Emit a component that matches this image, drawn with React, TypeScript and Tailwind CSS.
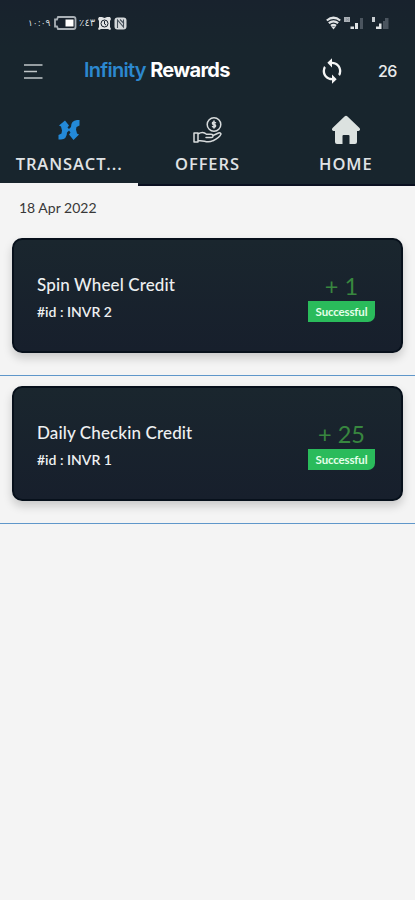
import { MdSync } from 'react-icons/md';

interface Transaction {
    title: string;
    id: string;
    amount: string;
}

const transactions: Transaction[] = [
    { title: 'Spin Wheel Credit', id: 'INVR 2', amount: '+ 1' },
    { title: 'Daily Checkin Credit', id: 'INVR 1', amount: '+ 25' },
];

function StatusBar() {
    return (
        <div className="flex h-[46px] items-center justify-between pl-7 pr-[26px] text-[#d5dadd]">
            <div className="flex items-center">
                <span className="w-[25px] whitespace-nowrap font-['DejaVu_Sans',sans-serif] text-[9px] leading-none">
                    ١٠:٠٩
                </span>
                <svg className="h-[14px] w-6" viewBox="0 0 24 14">
                    <path
                        d="M5 1h15.500q2 0 2 2v8q0 2-2 2H5l-1-2.500H2v-7h2z"
                        fill="#18222d"
                        stroke="#a9b0b6"
                        strokeWidth="1.800"
                    />
                    <path d="M12.500 3.500h8v7h-8z" fill="#fff" />
                </svg>
                <span className="ml-[2px] w-[19px] whitespace-nowrap font-['DejaVu_Sans',sans-serif] text-[10px] leading-none">
                    ٪٤٣
                </span>
                <svg className="h-[13px] w-[13px]" viewBox="0 0 13 13">
                    <path
                        d="M1 0h3l2.500 1L9 0h3l1 2-1 2v6l1 2-1 1-2-1H3l-2 1-1-1 1-2V4L0 2z"
                        fill="#e2e4e5"
                    />
                    <circle cx="6.500" cy="6.500" r="3.500" fill="none" stroke="#18222d" />
                    <path d="M6.500 4v3l1.500 1" fill="none" stroke="#18222d" />
                </svg>
                <svg className="ml-[3px] h-[13px] w-[13px]" viewBox="0 0 13 13">
                    <rect x=".5" y=".5" width="12" height="12" rx="3" fill="#d5d9db" />
                    <path
                        d="M3.500 11V3l6 7V2.500M6 2.500l4 4"
                        fill="none"
                        stroke="#45505a"
                        strokeWidth="1.100"
                    />
                </svg>
            </div>
            <div className="flex items-center">
                <svg className="h-[14px] w-[15px]" viewBox="0 0 15 14">
                    <path
                        d="M.8 4.500Q7.500-1 14.200 4.500M2.800 7.200q4.700-3.800 9.400 0M5 9.800q2.500-2 5 0"
                        fill="none"
                        stroke="#e0e3e5"
                        strokeWidth="2.200"
                    />
                    <path d="M5.200 10.500h4.600L7.500 13.500z" fill="#e0e3e5" />
                </svg>
                <svg className="ml-[3px] h-[14px] w-5" viewBox="0 0 20 14">
                    <path d="M0 1h6v5H0z" fill="#a9afb5" />
                    <path d="M2 2.500l3 2M5 2.500l-3 2" stroke="#8a929a" />
                    <path d="M6.500 10.500h3.500V13H6.500zM11 7h3v6h-3z" fill="#e0e3e5" />
                    <path d="M16 2h3v11h-3z" fill="#4b555f" />
                </svg>
                <svg className="ml-[7px] h-[14px] w-[18px]" viewBox="0 0 18 14">
                    <path d="M1 1h3v5H1z" fill="#c7ccd0" />
                    <path d="M5 10.500h3V13H5zM8 7.500h2.500V13H8z" fill="#e0e3e5" />
                    <path d="M12 5h2v8h-2zM14 2h3.500v11H14z" fill="#4b555f" />
                </svg>
            </div>
        </div>
    );
}

function Toolbar() {
    return (
        <div className="flex h-[50px] items-center">
            <svg
                className="ml-6 h-[15px] w-[19px]"
                viewBox="0 0 19 15"
                fill="none"
                stroke="#bfc5c7"
                strokeWidth="1.700"
            >
                <path d="M0 1h18.500M0 7.500h13M0 14h18.500" />
            </svg>
            <h1 className="ml-[41px] w-[150px] whitespace-nowrap pb-[2px] font-['Inter',sans-serif] text-[20px] font-semibold leading-none tracking-[-0.720px] text-white">
                <span className="text-[#2c88cf]">Infinity</span>{' '}
                <span className="font-bold">Rewards</span>
            </h1>
            <MdSync className="ml-[84px] h-[28px] w-[28px] text-[#f4f5f5]" />
            <span className="ml-8 font-['Inter',sans-serif] text-[16px] font-medium tracking-[-0.500px] text-[#e8eaeb]">
                26
            </span>
        </div>
    );
}

// Two interlocked arrows, the left one up and the right one down
function TransactionIcon() {
    return (
        <svg className="h-[22px] w-6" viewBox="0 0 24 22" fill="#2389d8">
            <path d="M8 1.500 12 6.500 10.500 8.500 12 10l2-2q0-6.500 6-7h2.500v5.500l-3 1.500-.5 2.500 1 4 2 1-5.500 5.500-4.500-5.500 1.500-2-1.500-2-2 2q0 6.500-6 7H1.500V16l3-1.500.5-3-1-4-2-1z" />
        </svg>
    );
}

function OffersIcon() {
    return (
        <svg
            className="h-[28px] w-[30px]"
            viewBox="0 0 30 28"
            fill="none"
            stroke="#d7dbdc"
            strokeWidth="1.500"
            strokeLinejoin="round"
            strokeLinecap="round"
        >
            <circle cx="22" cy="8.500" r="6.800" />
            <path d="M23.500 6.700q-3-1.200-3 .4t1.600 1.500 1.400 1.500-3 .5M22 5v7" />
            <path d="M2 17h4v9H2zM6 18q5-3 8.500.3H19q2 0 2 1.700t-2 1.500h-5M21 19.500l5.500-2.500q2-.6 2.500 1-1.500 3.700-8 6.700-4 2-8.500.5L6 24.500" />
        </svg>
    );
}

function HomeIcon() {
    return (
        <svg className="h-[30px] w-[30px]" viewBox="0 0 30 30">
            <path
                d="M13.500 1.500q1.500-1.300 3 0L28.500 13q1.500 2-1 3H26v11q0 2-2 2h-5.500v-8q0-1-1-1h-5q-1 0-1 1v8H6q-2 0-2-2V16H2.500q-2.500-1-1-3z"
                fill="#dce2e0"
            />
        </svg>
    );
}

const tabs = [
    { label: 'TRANSACT...', icon: <TransactionIcon /> },
    { label: 'OFFERS', icon: <OffersIcon /> },
    { label: 'HOME', icon: <HomeIcon /> },
];

function Tabs() {
    return (
        <div className="grid h-[90px] grid-cols-3">
            {tabs.map((tab, index) => (
                <div key={tab.label} className="flex flex-col items-center pt-[18px]">
                    <div className="flex h-[31px] items-center">{tab.icon}</div>
                    <span className="mt-[9px] font-['Open_Sans',sans-serif] text-[16.500px] font-semibold leading-5 tracking-[0.900px] text-[#e0e3e5]">
                        {tab.label}
                    </span>
                    {index === 0 ? (
                        <div className="mt-auto h-[3px] w-full bg-[#f4f4f4]" />
                    ) : (
                        <div className="mt-auto h-[2px] w-full bg-[#0a1020]" />
                    )}
                </div>
            ))}
        </div>
    );
}

function TransactionCard({ title, id, amount }: Transaction) {
    return (
        <div className="h-[148px] border-b border-[#5f97ca] px-3 pt-[10px]">
            <div className="flex h-[115px] justify-between rounded-[10px] border-2 border-[#07101b] bg-linear-to-b from-[#1a262e] to-[#171f2c] pl-[23px] pr-[26px] shadow-[0_5px_10px_rgba(0,0,0,0.18)]">
                <div className="flex flex-col pt-[34px] text-[#eef0f1]">
                    <span className="text-[17px] font-medium leading-[22px] tracking-[0.130px]">
                        {title}
                    </span>
                    <span className="mt-[7px] text-[14px] font-semibold leading-[18px]">
                        #id : {id}
                    </span>
                </div>
                <div className="flex w-[67px] flex-col items-center pt-[31px]">
                    <span className="h-[30px] whitespace-nowrap text-[23.500px] leading-[30px] text-[#38873f]">
                        {amount}
                    </span>
                    <span className="flex h-[21px] w-full items-center justify-center rounded-br-[7px] bg-[#2abb5b] text-[11.500px] font-bold tracking-[-0.150px] text-[#e4ffe9]">
                        Successful
                    </span>
                </div>
            </div>
        </div>
    );
}

export default function App() {
    return (
        <div className="min-h-screen w-full bg-[#f4f4f4] font-['Lato',sans-serif]">
            <header className="bg-linear-to-b from-[#18222d] to-[#18252d] to-25%">
                <StatusBar />
                <Toolbar />
                <Tabs />
            </header>
            <main>
                <p className="h-[42px] pl-[19px] pt-[13px] text-[14px] leading-[18px] text-[#383838]">
                    18 Apr 2022
                </p>
                {transactions.map((transaction) => (
                    <TransactionCard key={transaction.id} {...transaction} />
                ))}
            </main>
        </div>
    );
}
